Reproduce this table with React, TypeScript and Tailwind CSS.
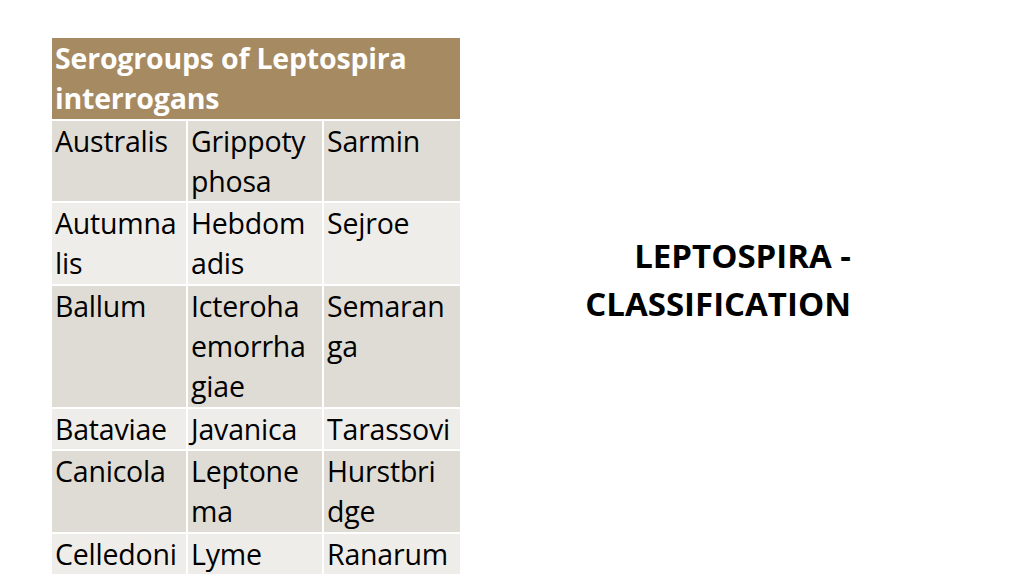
const ROWS: string[][][] = [
  [['Australis'], ['Grippoty', 'phosa'], ['Sarmin']],
  [['Autumna', 'lis'], ['Hebdom', 'adis'], ['Sejroe']],
  [['Ballum'], ['Icteroha', 'emorrha', 'giae'], ['Semaran', 'ga']],
  [['Bataviae'], ['Javanica'], ['Tarassovi']],
  [['Canicola'], ['Leptone', 'ma'], ['Hurstbri', 'dge']],
  [['Celledoni'], ['Lyme'], ['Ranarum']],
  [[''], [''], ['']],
];

const font = { fontFamily: '"Open Sans", "Liberation Sans", sans-serif' };

function Cell({ lines, dark }: { lines: string[]; dark: boolean }) {
  return (
    <div className={`pl-[3px] whitespace-nowrap overflow-hidden ${dark ? 'bg-[#dfdcd6]' : 'bg-[#efedea]'}`}>
      {lines.map((l, i) => (
        <div key={i}>{l || '\u00a0'}</div>
      ))}
    </div>
  );
}

export default function App() {
  return (
    <div className="w-[1024px] h-[576px] overflow-hidden bg-white flex text-black" style={font}>
      <div className="ml-[52px] mt-[38px] w-[408px] shrink-0">
        <div className="grid grid-cols-[134px_134px_136px] gap-[2px] bg-white text-[28.5px] leading-[40.3px] tracking-[-0.2px]">
          <div className="col-span-3 bg-[#a68a62] text-white font-bold pl-[3px]">
            <div>Serogroups of Leptospira</div>
            <div>interrogans</div>
          </div>
          {ROWS.map((row, r) =>
            row.map((lines, c) => <Cell key={`${r}-${c}`} lines={lines} dark={r % 2 === 0} />)
          )}
        </div>
      </div>
      <div className="flex-1 pr-[173px] pt-[232px] text-right font-bold text-[33px] leading-[48px]">
        <div>LEPTOSPIRA -</div>
        <div>CLASSIFICATION</div>
      </div>
    </div>
  );
}
